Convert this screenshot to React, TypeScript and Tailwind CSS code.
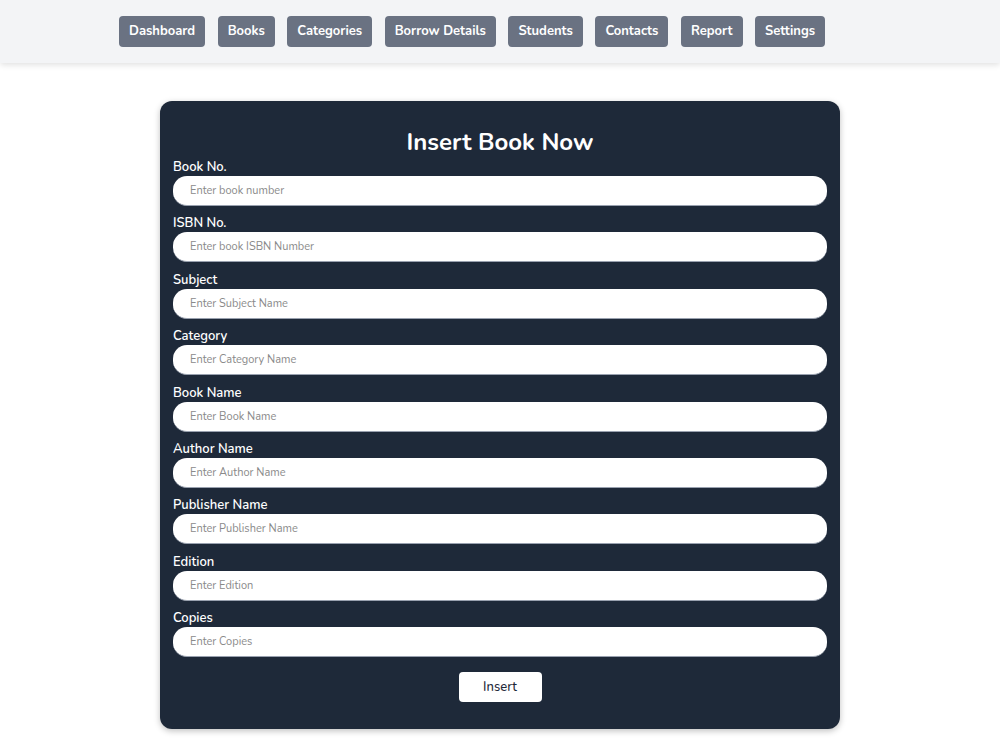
import React from "react"

const navItems = [
  "Dashboard",
  "Books",
  "Categories",
  "Borrow Details",
  "Students",
  "Contacts",
  "Report",
  "Settings",
]

const fields = [
  { label: "Book No.", placeholder: "Enter book number" },
  { label: "ISBN No.", placeholder: "Enter book ISBN Number" },
  { label: "Subject", placeholder: "Enter Subject Name" },
  { label: "Category", placeholder: "Enter Category Name" },
  { label: "Book Name", placeholder: "Enter Book Name" },
  { label: "Author Name", placeholder: "Enter Author Name" },
  { label: "Publisher Name", placeholder: "Enter Publisher Name" },
  { label: "Edition", placeholder: "Enter Edition" },
  { label: "Copies", placeholder: "Enter Copies" },
]

function Navbar() {
  return (
    <nav className="h-[63px] bg-gray-100 shadow-[0_2px_6px_rgba(0,0,0,0.12)] flex items-center pl-[119px] gap-[12.5px]">
      {navItems.map((item) => (
        <button
          key={item}
          className="h-[31px] px-[10px] rounded-[4px] bg-gray-500 text-white text-[13px] font-bold"
        >
          {item}
        </button>
      ))}
    </nav>
  )
}

function Field({ label, placeholder }: { label: string; placeholder: string }) {
  return (
    <div className="flex flex-col pb-[8.4px]">
      <label className="text-white text-[13px] font-semibold leading-[17px] pt-[1px]">
        {label}
      </label>
      <input
        type="text"
        placeholder={placeholder}
        className="h-[30px] w-full rounded-[14px] bg-white border-b-[1.5px] border-gray-400 px-[17px] text-[11px] text-gray-700 placeholder:text-[#8a8a8a] outline-none"
      />
    </div>
  )
}

export default function App() {
  return (
    <div
      className="min-h-[750px] bg-white"
      style={{ fontFamily: "Nunito, Lato, 'Noto Sans', sans-serif" }}
    >
      <Navbar />
      <main className="flex justify-center pt-[38px] pb-[20px]">
        <form className="w-[680px] bg-gray-800 rounded-xl shadow-[0_2px_6px_rgba(0,0,0,0.25)] px-[13px] pt-[24px] pb-[27px]">
          <h1 className="text-white text-center text-[24px] font-bold leading-[32px] pt-[1px]">
            Insert Book Now
          </h1>
          {fields.map((f) => (
            <Field key={f.label} {...f} />
          ))}
          <div className="flex justify-center mt-[6px]">
            <button
              type="button"
              className="w-[83px] h-[30px] pt-[2px] rounded-[4px] bg-white text-gray-800 text-[13px] font-medium"
            >
              Insert
            </button>
          </div>
        </form>
      </main>
    </div>
  )
}
